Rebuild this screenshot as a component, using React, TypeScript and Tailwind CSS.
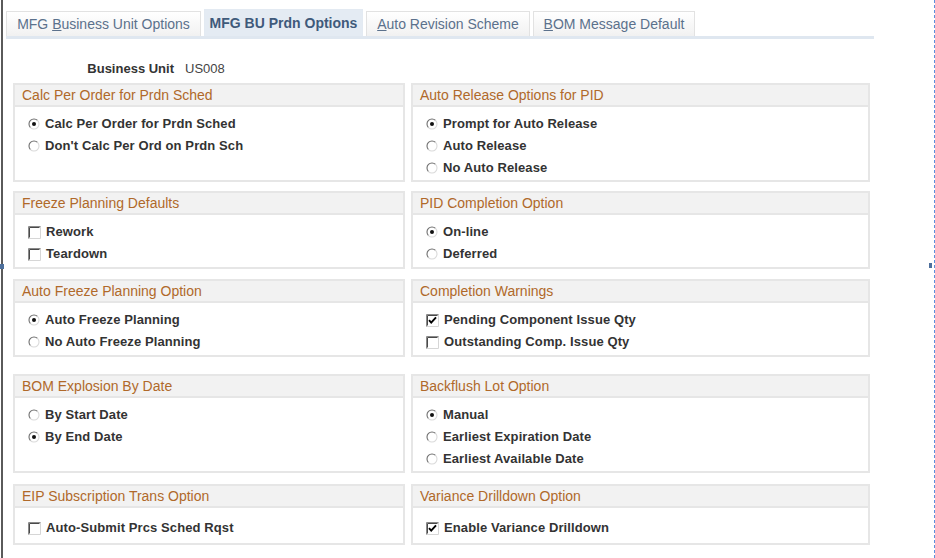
import React from 'react';

type Item = { label: string; checked?: boolean };

interface Group {
    title: string;
    kind: 'radio' | 'check';
    items: Item[];
}

const rows: { h: string; mt: string; pt: string; left: Group; right: Group }[] = [
    {
        h: 'h-[99px]',
        mt: 'mt-0',
        pt: 'pt-[6px]',
        left: {
            title: 'Calc Per Order for Prdn Sched',
            kind: 'radio',
            items: [{ label: 'Calc Per Order for Prdn Sched', checked: true }, { label: "Don't Calc Per Ord on Prdn Sch" }],
        },
        right: {
            title: 'Auto Release Options for PID',
            kind: 'radio',
            items: [{ label: 'Prompt for Auto Release', checked: true }, { label: 'Auto Release' }, { label: 'No Auto Release' }],
        },
    },
    {
        h: 'h-[78px]',
        mt: 'mt-[9px]',
        pt: 'pt-[6px]',
        left: {
            title: 'Freeze Planning Defaults',
            kind: 'check',
            items: [{ label: 'Rework' }, { label: 'Teardown' }],
        },
        right: {
            title: 'PID Completion Option',
            kind: 'radio',
            items: [{ label: 'On-line', checked: true }, { label: 'Deferred' }],
        },
    },
    {
        h: 'h-[78px]',
        mt: 'mt-[10px]',
        pt: 'pt-[6px]',
        left: {
            title: 'Auto Freeze Planning Option',
            kind: 'radio',
            items: [{ label: 'Auto Freeze Planning', checked: true }, { label: 'No Auto Freeze Planning' }],
        },
        right: {
            title: 'Completion Warnings',
            kind: 'check',
            items: [{ label: 'Pending Component Issue Qty', checked: true }, { label: 'Outstanding Comp. Issue Qty' }],
        },
    },
    {
        h: 'h-[99px]',
        mt: 'mt-[17px]',
        pt: 'pt-[6px]',
        left: {
            title: 'BOM Explosion By Date',
            kind: 'radio',
            items: [{ label: 'By Start Date' }, { label: 'By End Date', checked: true }],
        },
        right: {
            title: 'Backflush Lot Option',
            kind: 'radio',
            items: [{ label: 'Manual', checked: true }, { label: 'Earliest Expiration Date' }, { label: 'Earliest Available Date' }],
        },
    },
    {
        h: 'h-[61px]',
        mt: 'mt-[11px]',
        pt: 'pt-[9px]',
        left: {
            title: 'EIP Subscription Trans Option',
            kind: 'check',
            items: [{ label: 'Auto-Submit Prcs Sched Rqst' }],
        },
        right: {
            title: 'Variance Drilldown Option',
            kind: 'check',
            items: [{ label: 'Enable Variance Drilldown', checked: true }],
        },
    },
];

function Radio({ checked }: { checked?: boolean }) {
    return (
        <svg width="12" height="12" viewBox="0 0 12 12" className="shrink-0">
            <circle cx="6" cy="6" r="5" fill="#fff" />
            <path d="M2.46 9.54 A5 5 0 0 1 9.54 2.46" stroke="#6f6f6f" strokeWidth="1.1" fill="none" />
            <path d="M9.54 2.46 A5 5 0 0 1 2.46 9.54" stroke="#dadada" strokeWidth="1.1" fill="none" />
            {checked && <circle cx="6" cy="6" r="2" fill="#111" />}
        </svg>
    );
}

function Check({ checked }: { checked?: boolean }) {
    return (
        <svg width="13" height="13" viewBox="0 0 13 13" className="shrink-0">
            <rect x="0" y="0" width="13" height="13" fill="#fff" />
            <path d="M12.5 0.5 V12.5 H0.5" stroke="#d6d6d6" fill="none" />
            <path d="M0.5 12.5 V0.5 H12.5" stroke="#8a8a8a" fill="none" />
            <path d="M1.5 11.5 V1.5 H11.5" stroke="#4a4a4a" fill="none" />
            {checked && <path d="M3 6.2 L5.2 8.6 L10 3.4" stroke="#000" strokeWidth="1.9" fill="none" />}
        </svg>
    );
}

function GroupBox({ group, h, pt }: { group: Group; h: string; pt: string }) {
    return (
        <div className={`${h} border-2 border-[#e6e6e6] bg-white`}>
            <div className="flex h-[22px] items-center border-b-2 border-[#e6e6e6] bg-[#f2f2f2] pl-[7px] text-[14px] text-[#b0692a]">
                {group.title}
            </div>
            <div className={`${pt} pl-[13px]`}>
                {group.items.map((item) => (
                    <div key={item.label} className="flex h-[22px] items-center gap-[5px]">
                        {group.kind === 'radio' ? <Radio checked={item.checked} /> : <Check checked={item.checked} />}
                        <span className="text-[13px] font-bold tracking-[0.1px] text-[#333]">{item.label}</span>
                    </div>
                ))}
            </div>
        </div>
    );
}

function Tab({ w, active, children }: { w: string; active?: boolean; children: React.ReactNode }) {
    return (
        <div
            className={`${w} flex items-center justify-center border border-b-0 text-[14px] ${
                active
                    ? 'h-[27px] border-[#e3eaf2] bg-[#e4ebf3] font-bold text-[#3f5a7b]'
                    : 'h-[25px] border-[#e2e2e2] bg-gradient-to-b from-white to-[#f1f1f1] text-[#5b718c]'
            }`}
        >
            {children}
        </div>
    );
}

export default function App() {
    return (
        <div
            className="relative flex h-[558px] w-[935px] overflow-hidden bg-white"
            style={{ fontFamily: '"Liberation Sans", Arial, sans-serif' }}
        >
            <div className="ml-[1px] w-[2px] bg-[#5a5a5a]" />
            <div className="flex-1 pl-[3px] pt-[9px]">
                {/* tabs */}
                <div className="flex items-end gap-[3px]">
                    <Tab w="w-[195px]">
                        <span>
                            MFG <span className="underline">B</span>usiness Unit Options
                        </span>
                    </Tab>
                    <Tab w="w-[159px]" active>
                        MFG BU Prdn Options
                    </Tab>
                    <Tab w="w-[164px]">
                        <span>
                            <span className="underline">A</span>uto Revision Scheme
                        </span>
                    </Tab>
                    <Tab w="w-[162px]">
                        <span>
                            <span className="underline">B</span>OM Message Default
                        </span>
                    </Tab>
                </div>
                <div className="h-[3px] w-[868px] bg-[#dfe7f0]" />

                <div className="mt-[22px] flex h-[16px] items-center text-[13px]">
                    <span className="w-[168px] text-right font-bold text-[#333]">Business Unit</span>
                    <span className="ml-[11px] text-[#444]">US008</span>
                </div>

                <div className="ml-[7px] mt-[6px] w-[857px]">
                    {rows.map((row) => (
                        <div key={row.left.title} className={`${row.mt} grid grid-cols-[392px_459px] gap-[6px]`}>
                            <GroupBox group={row.left} h={row.h} pt={row.pt} />
                            <GroupBox group={row.right} h={row.h} pt={row.pt} />
                        </div>
                    ))}
                </div>
            </div>
            <div className="w-[1px] border-l border-dashed border-[#5b8fdc]" />

            {/* splitter markers */}
            <div className="absolute left-0 top-[264px] h-[5px] w-[4px] bg-[#4d6f9c]" />
            <div className="absolute left-[929px] top-[263px] h-[5px] w-[3px] bg-[#4d6f9c]" />
        </div>
    );
}
